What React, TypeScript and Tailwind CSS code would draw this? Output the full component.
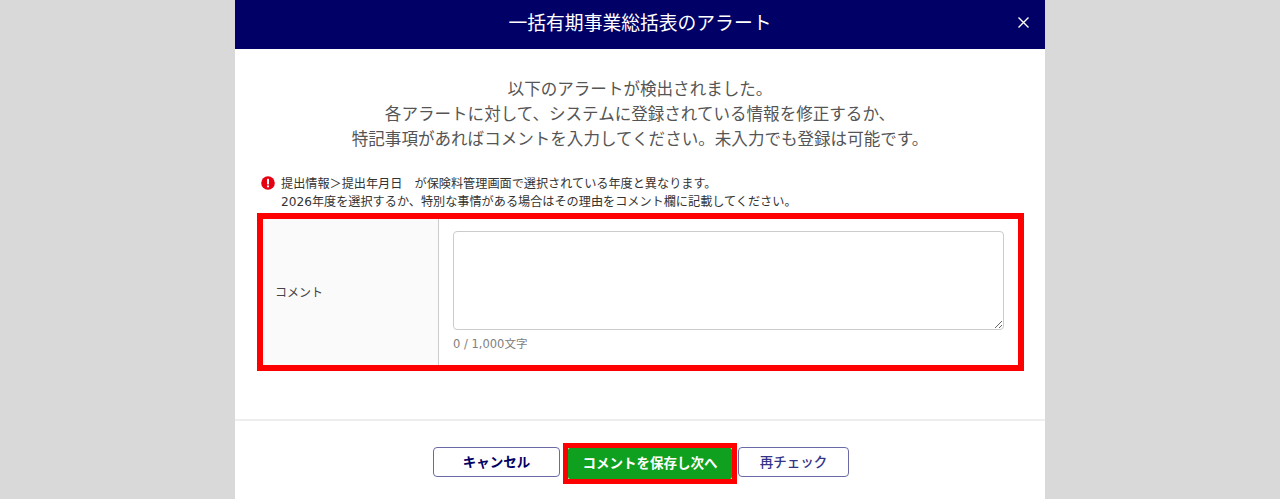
const jp = "font-['DejaVu_Sans','Noto_Sans_CJK_JP','Noto_Sans',sans-serif]";

function AlertIcon() {
  return (
    <svg viewBox="0 0 14 14" className="mt-[1px] h-[14px] w-[14px] shrink-0">
      <circle cx="7" cy="7" r="6.8" fill="#e60012" />
      <rect x="6" y="2.8" width="2" height="5.6" rx="0.6" fill="#fff" />
      <circle cx="7" cy="10.4" r="1.1" fill="#fff" />
    </svg>
  );
}

export default function App() {
  return (
    <div className={`flex h-[499px] justify-center overflow-hidden bg-[#d9d9d9] ${jp}`}>
      <div className="flex h-[499px] w-[810px] flex-col bg-white">
        <header className="relative flex h-[49px] shrink-0 items-center justify-center bg-[#000066] pb-[1px] text-[18.8px] text-white">
          一括有期事業総括表のアラート
          <svg viewBox="0 0 11 11" className="absolute right-[16px] top-[17px] h-[11px] w-[11px]" stroke="#fff" strokeWidth="1.4">
            <path d="M0.5 0.5l10 10M10.5 0.5l-10 10" />
          </svg>
        </header>

        <div className="pt-[28px] text-center text-[16.56px] leading-[25px] text-[#555]">
          <p>以下のアラートが検出されました。</p>
          <p>各アラートに対して、システムに登録されている情報を修正するか、</p>
          <p>特記事項があればコメントを入力してください。未入力でも登録は可能です。</p>
        </div>

        <div className="mt-[23px] flex gap-[6px] pl-[26px] text-[12.15px] leading-[18px] text-[#333]">
          <AlertIcon />
          <p>
            提出情報＞提出年月日　が保険料管理画面で選択されている年度と異なります。
            <br />
            2026年度を選択するか、特別な事情がある場合はその理由をコメント欄に記載してください。
          </p>
        </div>

        <div className="ml-[22px] mt-[2px] flex h-[158px] w-[767px] border-[6px] border-[#ff0000]">
          <div className="flex w-[176px] shrink-0 items-center border-r border-[#ccc] bg-[#fafafa] pl-[12px] pt-[1px] text-[12px] text-[#444]">
            コメント
          </div>
          <div className="flex flex-1 flex-col pl-[14px] pt-[12px]">
            <textarea className="h-[99px] w-[551px] rounded-[4px] border border-[#ccc] bg-white" />
            <span className="mt-[5px] text-[11.5px] leading-[18px] text-[#808080]">0 / 1,000文字</span>
          </div>
        </div>

        <div className="mt-[48px] border-t-2 border-[#eeeeee]" />

        <footer className="flex items-start pl-[198px] pt-[22px] text-[13.5px]">
          <button className="mt-[4px] h-[30px] w-[127px] rounded-[4px] border border-[#6a6aa6] bg-white pt-[1px] font-bold text-[#000066]">
            キャンセル
          </button>
          <div className="ml-[3px] border-[5px] border-[#ff0000]">
            <button className="block h-[31px] w-[164px] rounded-[2px] bg-[#10a020] font-bold text-white">
              コメントを保存し次へ
            </button>
          </div>
          <button className="ml-[1px] mt-[4px] h-[30px] w-[111px] rounded-[4px] border border-[#6a6aa6] bg-white pt-[1px] font-medium text-[#333388]">
            再チェック
          </button>
        </footer>
      </div>
    </div>
  );
}
